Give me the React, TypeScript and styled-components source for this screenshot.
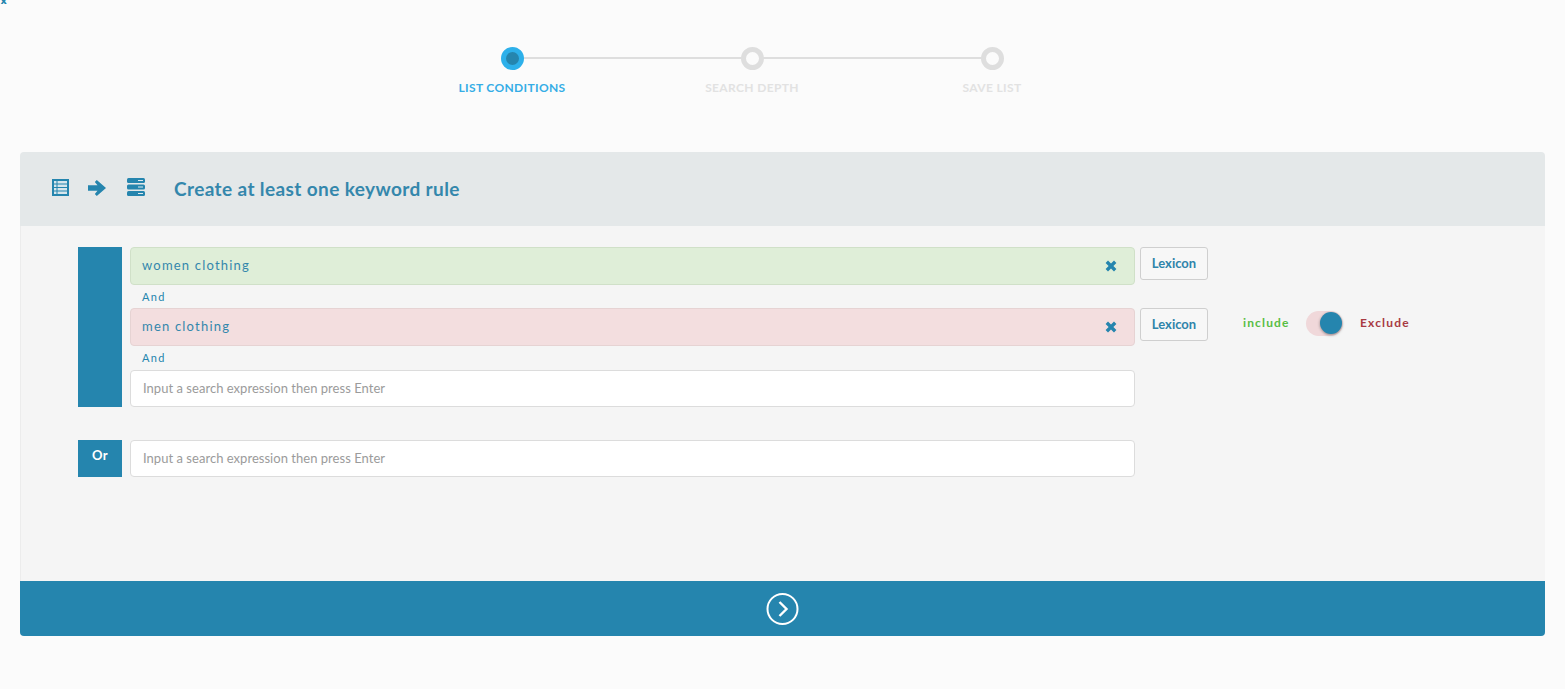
import React from "react";
import styled, { createGlobalStyle } from "styled-components";

const Global = createGlobalStyle`
  html, body { margin: 0; padding: 0; background: #fbfbfb; }
  body { font-family: Lato, "Liberation Sans", sans-serif; }
`;

const Page = styled.div`
  width: 1565px;
  height: 689px;
  overflow: hidden;
  background: #fbfbfb;
  box-sizing: border-box;
`;

const CutOff = styled.div`
  height: 4px;
  overflow: hidden;
  color: #2585ae;
  font-size: 14px;
  line-height: 4px;
  font-weight: 700;
  & > span { display: block; margin-top: -7px; line-height: 14px; }
`;

const Stepper = styled.div`
  display: flex;
  width: 720px;
  margin: 43px 0 0 392px;
`;

const Step = styled.div<{ $active?: boolean; $first?: boolean }>`
  position: relative;
  width: 240px;
  display: flex;
  flex-direction: column;
  align-items: center;
  color: ${(p) => (p.$active ? "#35ade6" : "#e2e2e2")};
  font-size: 12px;
  font-weight: 700;
  letter-spacing: 0.35px;
  line-height: 16px;
  &::before {
    content: "";
    display: ${(p) => (p.$first ? "none" : "block")};
    position: absolute;
    top: 10px;
    right: 50%;
    width: 240px;
    height: 2px;
    background: #dedede;
  }
`;

const Dot = styled.div<{ $active?: boolean }>`
  position: relative;
  z-index: 1;
  width: 23px;
  height: 23px;
  box-sizing: border-box;
  border-radius: 50%;
  border: 5px solid ${(p) => (p.$active ? "#2db0ea" : "#dedede")};
  background: ${(p) => (p.$active ? "#2585ae" : "#fbfbfb")};
  margin-bottom: 10px;
`;

const Panel = styled.section`
  margin: 56px 20px 0;
  width: 1525px;
  border-radius: 4px;
  overflow: hidden;
`;

const Header = styled.header`
  height: 74px;
  background: #e4e8e9;
  display: flex;
  align-items: center;
  padding-left: 32px;
  color: #2585ae;
`;

const HeaderIcons = styled.div`
  display: flex;
  align-items: center;
  margin-right: 29px;
  margin-top: -3px;
  & > svg { display: block; }
`;

const ListIcon = styled.svg`
  width: 17px;
  height: 17px;
  margin-right: 19px;
`;

const ArrowIcon = styled.svg`
  width: 18px;
  height: 16px;
  margin-right: 21px;
`;

const ServerIcon = styled.svg`
  width: 18px;
  height: 18px;
  margin-top: -2px;
`;

const Title = styled.h2`
  margin: -1px 0 0;
  font-size: 19px;
  font-weight: 700;
  letter-spacing: 0.39px;
  color: #3487ac;
`;

const Body = styled.div`
  height: 355px;
  box-sizing: border-box;
  background: #f5f5f5;
  border-left: 1px solid #ececec;
  padding: 21px 0 0 57px;
`;

const Group = styled.div`
  display: flex;
  gap: 8px;
  align-items: stretch;
`;

const Side = styled.div`
  width: 44px;
  background: #2585ae;
  color: #fff;
  font-size: 13px;
  font-weight: 700;
  letter-spacing: 0.3px;
  text-align: center;
  padding-top: 8px;
  box-sizing: border-box;
  line-height: 14px;
`;

const Rows = styled.div`
  display: flex;
  flex-direction: column;
`;

const TagRow = styled.div`
  display: flex;
  gap: 5px;
  align-items: flex-start;
`;

const Tag = styled.div<{ $tone: "green" | "red" }>`
  width: 1005px;
  height: 38px;
  box-sizing: border-box;
  border-radius: 4px;
  border: 1px solid ${(p) => (p.$tone === "green" ? "#d0e0c8" : "#e6d3d3")};
  background: ${(p) => (p.$tone === "green" ? "#dfeed8" : "#f3dedf")};
  color: #3487ac;
  font-size: 13px;
  letter-spacing: 1.2px;
  display: flex;
  align-items: center;
  justify-content: space-between;
  padding: 0 17px 2px 11px;
`;

const RemoveIcon = styled.svg`
  width: 12px;
  height: 12px;
  margin-top: 2px;
  fill: #2585ae;
`;

const LexiconButton = styled.button`
  width: 68px;
  height: 33px;
  box-sizing: border-box;
  border: 1px solid #cfcfcf;
  border-radius: 3px;
  background: #f7f7f7;
  color: #2f84aa;
  font-family: inherit;
  font-size: 13px;
  font-weight: 700;
  padding: 0 0 2px;
`;

const AndLabel = styled.div<{ $tall?: boolean }>`
  height: ${(p) => (p.$tall ? "24px" : "23px")};
  line-height: 23px;
  padding-left: 12px;
  color: #2585ae;
  font-size: 11px;
  letter-spacing: 1.4px;
`;

const SearchInput = styled.div`
  width: 1005px;
  height: 37px;
  box-sizing: border-box;
  background: #fff;
  border: 1px solid #dcdcdc;
  border-radius: 4px;
  padding: 0 12px 1px;
  display: flex;
  align-items: center;
  color: #9b9b9b;
  font-size: 13px;
  letter-spacing: 0.03px;
`;

const ToggleArea = styled.div`
  display: flex;
  align-items: center;
  margin-left: 30px;
  margin-top: 3px;
  height: 25px;
  font-size: 12px;
  font-weight: 700;
  letter-spacing: 1.15px;
`;

const Include = styled.span`
  color: #58bd43;
  width: 63px;
  margin-top: -2px;
`;

const Exclude = styled.span`
  color: #a83a42;
  margin-left: 17px;
  margin-top: -2px;
`;

const Track = styled.div`
  position: relative;
  width: 37px;
  height: 25px;
  border-radius: 13px;
  background: #f0d8da;
`;

const Knob = styled.div`
  position: absolute;
  top: 1px;
  right: 1px;
  width: 22px;
  height: 22px;
  border-radius: 50%;
  background: #2585ae;
  box-shadow: 0 1px 3px rgba(0, 0, 0, 0.4);
`;

const OrGroup = styled(Group)`
  margin-top: 33px;
`;

const Footer = styled.footer`
  height: 55px;
  background: #2585ae;
  display: flex;
  align-items: center;
  justify-content: center;
`;

const placeholder = "Input a search expression then press Enter";

const Remove = () => (
  <RemoveIcon viewBox="0 0 12 12">
    <path d="M3 .6 6 3.6 9 .6 11.4 3 8.4 6 11.4 9 9 11.4 6 8.4 3 11.4.6 9 3.6 6 .6 3z" />
  </RemoveIcon>
);

export default function App() {
  return (
    <>
      <Global />
      <Page>
        <CutOff><span>x</span></CutOff>
        <Stepper>
          <Step $active $first>
            <Dot $active />
            LIST CONDITIONS
          </Step>
          <Step>
            <Dot />
            SEARCH DEPTH
          </Step>
          <Step>
            <Dot />
            SAVE LIST
          </Step>
        </Stepper>
        <Panel>
          <Header>
            <HeaderIcons>
              <ListIcon viewBox="0 0 17 17">
                <rect width="17" height="17" fill="#2585ae" />
                <rect x="2" y="2" width="13" height="13" fill="#d7e6ec" />
                <path d="M5 2v13M2 5h13M2 8.5h13M2 12h13" stroke="#2585ae" strokeWidth="1" fill="none" />
              </ListIcon>
              <ArrowIcon viewBox="0 0 18 16" fill="#2585ae">
                <path d="M0 5.2H9.5L6.8 2 8.8 0 18 8 8.8 16 6.8 14 9.5 10.8H0z" />
              </ArrowIcon>
              <ServerIcon viewBox="0 0 18 18">
                <rect y="0" width="18" height="5" rx="1.5" fill="#2585ae" />
                <rect y="6.5" width="18" height="5" rx="1.5" fill="#2585ae" />
                <rect y="13" width="18" height="5" rx="1.5" fill="#2585ae" />
                <path d="M11 2.5h5M11 9h5M11 15.5h5" stroke="#dfeaee" strokeWidth="1" />
              </ServerIcon>
            </HeaderIcons>
            <Title>Create at least one keyword rule</Title>
          </Header>
          <Body>
            <Group>
              <Side />
              <Rows>
                <TagRow>
                  <Tag $tone="green">
                    women clothing
                    <Remove />
                  </Tag>
                  <LexiconButton>Lexicon</LexiconButton>
                </TagRow>
                <AndLabel>And</AndLabel>
                <TagRow>
                  <Tag $tone="red">
                    men clothing
                    <Remove />
                  </Tag>
                  <LexiconButton>Lexicon</LexiconButton>
                  <ToggleArea>
                    <Include>include</Include>
                    <Track>
                      <Knob />
                    </Track>
                    <Exclude>Exclude</Exclude>
                  </ToggleArea>
                </TagRow>
                <AndLabel $tall>And</AndLabel>
                <SearchInput>{placeholder}</SearchInput>
              </Rows>
            </Group>
            <OrGroup>
              <Side>Or</Side>
              <SearchInput>{placeholder}</SearchInput>
            </OrGroup>
          </Body>
          <Footer>
            <svg width="33" height="32" viewBox="0 0 33 32" fill="none" stroke="#fff">
              <circle cx="16.5" cy="16" r="15" strokeWidth="2" />
              <path d="M13.5 9 L20.5 16 L13.5 23" strokeWidth="2.4" />
            </svg>
          </Footer>
        </Panel>
      </Page>
    </>
  );
}
